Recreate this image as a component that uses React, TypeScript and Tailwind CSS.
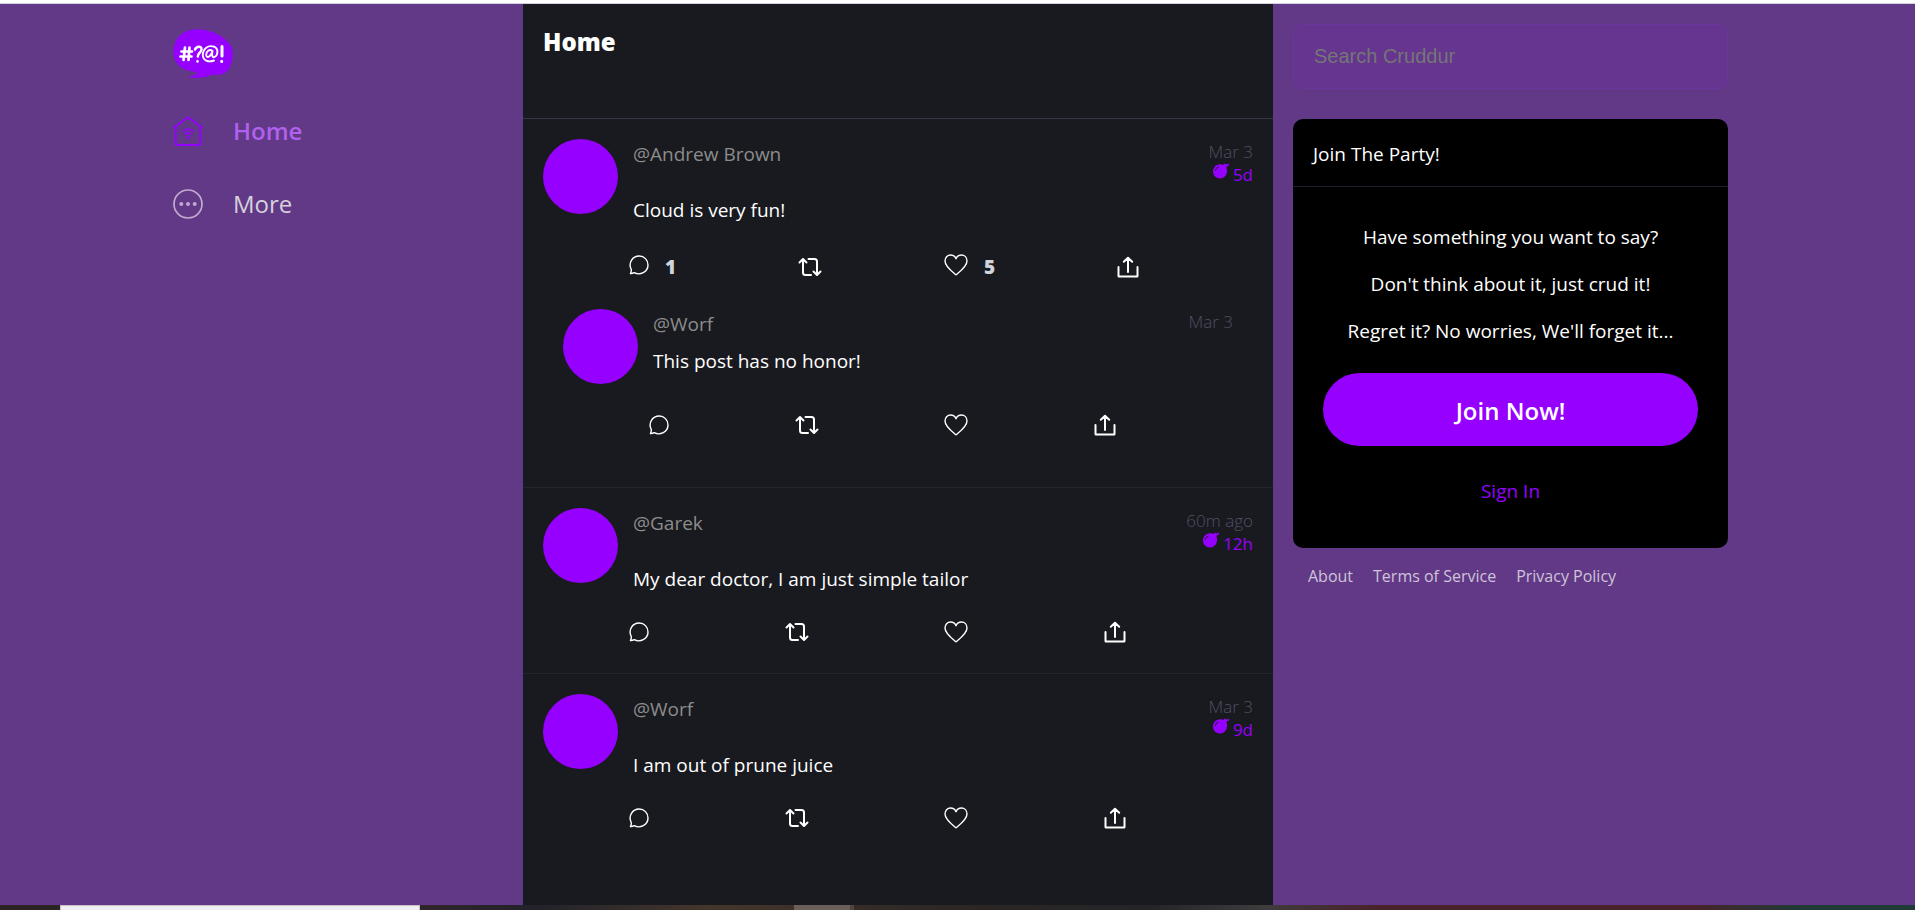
import React from "react";

type Stats = { replies?: number; likes?: number };
type Post = { handle: string; ago: string; expires?: string; message: string } & Stats;

const LogoIcon = () => (
  <svg className="h-[50px] w-[60px]" viewBox="0 0 60 50" role="img" aria-label="Cruddur">
    <path
      d="M23 .3C11 .6 2 8 .6 20C-.6 32 6 41 20 42.500L25 43.500C22 46 18 47.500 14.500 48C23 50 33 49 39 45.500C46 47 54 45 57 38C60 30 61 23 58 17C52 7 37 0 23 .3Z"
      fill="#9500FF"
    />
    <g fill="none" stroke="#fff" strokeWidth="2.500" strokeLinecap="round" strokeLinejoin="round">
      <path d="M8.500 22.500H19M7.500 27.500H18.500M12 18.500L10.500 31M16.500 18.500L15.500 31" strokeWidth="2.700" />
      <path d="M22 20.500C23.500 17 29 16.500 28.500 20.500C28.200 23.500 24.500 24.500 24.800 27.500M24.500 32.300V32.500" />
      <path d="M39.500 22C36.500 19.500 33 22.500 33.200 26C33.500 29.500 37.500 28.500 39.500 22C38.500 27 39.500 29 41.500 28C45 26 46 20 41 17.700C35 15.500 30 20 29.800 26C30 32 36 33.500 41 31.500" strokeWidth="1.900" />
      <path d="M49 17.500V27M48.700 32.300V32.500" strokeWidth="3" />
    </g>
  </svg>
);

const HomeIcon = () => (
  <svg className="size-[30px] text-[#9500ff]" viewBox="0 0 30 30" fill="none" stroke="currentColor" strokeWidth="2" aria-hidden="true">
    <path d="M.8 11.500L15 1.200L29.200 11.500M2.700 10.500V27.500Q2.700 29 4.200 29H25.800Q27.300 29 27.300 27.500V10.500" strokeLinejoin="round" />
    <path d="M9.500 15.500Q15 10.800 20.500 15.500M12 18.500Q15 16 18 18.500" strokeWidth="1.700" />
    <circle cx="15" cy="21.300" r="1.600" fill="currentColor" stroke="none" />
  </svg>
);

const MoreIcon = () => (
  <svg className="size-[30px] text-[#c0aad0]" viewBox="0 0 30 30" fill="currentColor" aria-hidden="true">
    <circle cx="15" cy="15" r="14" fill="none" stroke="currentColor" strokeWidth="1.700" />
    <circle cx="8.300" cy="15" r="2" />
    <circle cx="15" cy="15" r="2" />
    <circle cx="21.700" cy="15" r="2" />
  </svg>
);

const ReplyIcon = () => (
  <svg className="size-5" viewBox="0 0 20 20" fill="none" stroke="currentColor" strokeWidth="1.400" strokeLinejoin="round" aria-hidden="true">
    <path d="M1.500 18.600C2.200 17 2.500 15.600 2.200 14.400C-1 8 3.300 1 10.300 1C15.200 1 19 5 19 10C19 17 11 20.800 5.200 17.700C4 18.400 2.800 18.700 1.500 18.600Z" />
  </svg>
);

const RepostIcon = () => (
  <svg className="h-5 w-6" viewBox="0 0 24 20" fill="none" stroke="currentColor" strokeWidth="2" strokeLinecap="round" strokeLinejoin="round" aria-hidden="true">
    <path d="M1.500 5.500L5 2L8.500 5.500M5 2.500V15.500Q5 18 7.500 18H13M15.500 14.500L19 18L22.500 14.500M19 17.500V4.500Q19 2 16.500 2H10.500" />
  </svg>
);

const LikeIcon = () => (
  <svg className="h-[22px] w-6" viewBox="0 0 24 22" fill="none" stroke="currentColor" strokeWidth="1.400" strokeLinejoin="round" aria-hidden="true">
    <path d="M12 20.800C8 17.500 1 12.500 1 7C1 3.500 3.400 1 6.500 1C9 1 11 2.300 12 4.700C13 2.300 15 1 17.500 1C20.600 1 23 3.500 23 7C23 12.500 16 17.500 12 20.800Z" />
  </svg>
);

const ShareIcon = () => (
  <svg className="h-[22px] w-[22px]" viewBox="0 0 22 22" fill="none" stroke="currentColor" strokeWidth="2" strokeLinecap="round" strokeLinejoin="round" aria-hidden="true">
    <path d="M1.500 11V20Q1.500 20.500 2 20.500H20Q20.500 20.500 20.500 20V11M11 16V2M6.800 5.800L11 1.800L15.200 5.800" />
  </svg>
);

const BombIcon = () => (
  <svg className="h-4 w-[17px]" viewBox="0 0 17 16" fill="currentColor" aria-hidden="true">
    <path d="M7 1.200C8.400 1.100 9.600 1.500 10.500 2L11.500 .6L13.500 1.400L16.500 .2L15.500 2L16 3H14.200L13.500 4.500C15.500 9.500 12.500 15.500 7 15.500C3 15.500 0 12.500 0 8.500C0 4.500 3 1.400 7 1.200Z" />
    <path d="M2.200 8Q2.600 4.800 5.600 4" fill="none" stroke="#1b1429" strokeWidth="1" />
  </svg>
);

function Avatar() {
  return <div className="size-[75px] shrink-0 rounded-full bg-[#9500ff]" />;
}

function Actions({ replies, likes, className }: Stats & { className: string }) {
  return (
    <div className={`flex items-center justify-between text-white ${className}`}>
      <button aria-label="Reply" className="flex items-center gap-4">
        <span className={replies ? "pb-1" : ""}><ReplyIcon /></span>
        {replies && <span className="text-[19px] leading-6 font-extrabold text-gray-300">{replies}</span>}
      </button>
      <button aria-label="Repost"><RepostIcon /></button>
      <button aria-label="Like" className="flex items-center gap-4">
        <span className={likes ? "pb-1" : ""}><LikeIcon /></span>
        {likes && <span className="text-[19px] leading-6 font-extrabold text-gray-300">{likes}</span>}
      </button>
      <button aria-label="Share"><ShareIcon /></button>
    </div>
  );
}

function PostHead({ post, reply = false }: { post: Post; reply?: boolean }) {
  return (
    <div className="flex gap-[15px]">
      <Avatar />
      <div className="min-w-0 flex-1">
        <div className={`flex justify-between ${reply ? "h-[37px]" : "h-[56px]"}`}>
          <a href="#profile" className="text-[19px] leading-[30px] text-[#8c8c8c]">{post.handle}</a>
          <div className="pt-px text-right text-[17px] leading-[23px] font-light text-[#4c5162]">
            <div>{post.ago}</div>
            {post.expires && (
              <div className="flex items-start justify-end gap-[3px] font-normal text-[#9500ff]">
                <BombIcon />
                {post.expires}
              </div>
            )}
          </div>
        </div>
        <p className="text-[19px] leading-[30px] text-white">{post.message}</p>
      </div>
    </div>
  );
}

const posts: (Post & { reply?: Post })[] = [
  {
    handle: "@Andrew Brown", ago: "Mar 3", expires: "5d", message: "Cloud is very fun!", replies: 1, likes: 5,
    reply: { handle: "@Worf", ago: "Mar 3", message: "This post has no honor!" },
  },
  { handle: "@Garek", ago: "60m ago", expires: "12h", message: "My dear doctor, I am just simple tailor" },
  { handle: "@Worf", ago: "Mar 3", expires: "9d", message: "I am out of prune juice" },
];

export default function App() {
  return (
    <div className="flex min-h-screen flex-col bg-[#613986] font-['Open_Sans','Noto_Sans',sans-serif]">
      <div className="h-1 border-b border-[#d5cfdc] bg-white" />
      <div className="flex flex-1 justify-center">
        <nav className="flex w-[356px] flex-col pt-[25px] pl-[6px]">
          <a href="#top" className="self-start"><LogoIcon /></a>
          <a href="#home" className="mt-[33px] flex h-[38px] items-center gap-[30px] text-2xl font-semibold text-[#b061ee]">
            <HomeIcon />Home
          </a>
          <a href="#more" className="mt-[35px] flex h-[38px] items-center gap-[30px] text-2xl text-[#d6d1dc]">
            <MoreIcon />More
          </a>
        </nav>

        <main className="w-[750px] bg-[#191a1f]">
          <header className="h-[115px] border-b border-[#323846] px-5 pt-[22px]">
            <h1 className="text-[24px] leading-8 font-extrabold text-white">Home</h1>
          </header>
          {posts.map((post) => (
            <article key={post.handle} className="border-b border-[#22252f] p-5 last:border-b-0">
              <PostHead post={post} />
              <Actions replies={post.replies} likes={post.likes} className={post.reply ? "mt-[26px] h-8 pr-[114px] pl-[86px]" : "mt-[22px] h-8 pr-[127px] pl-[86px]"} />
              {post.reply && (
                <div className="px-5 pt-[26px] pb-[26px]">
                  <PostHead post={post.reply} reply />
                  <Actions className="mt-[25px] h-8 pr-[117px] pl-[86px]" />
                </div>
              )}
              {!post.reply && <div className="h-[5px]" />}
            </article>
          ))}
        </main>

        <aside className="w-[475px] px-5 pt-5">
          <input
            type="search"
            aria-label="Search Cruddur"
            placeholder="Search Cruddur"
            className="h-[65px] w-full rounded-[10px] border border-[#6b369d] bg-[#653590] px-5 font-['Liberation_Sans',sans-serif] text-[20px] text-white placeholder:text-[#757575]"
          />
          <section className="mt-[30px] overflow-hidden rounded-[10px] bg-black text-[19px] text-white">
            <h2 className="h-[68px] border-b border-[#1b202b] px-5 pt-5 leading-[30px]">Join The Party!</h2>
            <div className="px-[30px] pt-[35px] pb-[42px] text-center leading-[30px]">
              <div className="flex flex-col gap-[17px]">
                <p>Have something you want to say?</p>
                <p>Don&apos;t think about it, just crud it!</p>
                <p>Regret it? No worries, We&apos;ll forget it...</p>
              </div>
              <button className="mt-[27px] h-[73px] w-full rounded-full bg-[#9500ff] pt-[2px] text-2xl font-semibold">Join Now!</button>
              <a href="#signin" className="mt-[30px] block text-[#9500ff]">Sign In</a>
            </div>
          </section>
          <footer className="mt-4 flex gap-5 px-[15px] text-base leading-6 text-[#cfc4d9]">
            <a href="#about">About</a>
            <a href="#terms">Terms of Service</a>
            <a href="#privacy">Privacy Policy</a>
          </footer>
        </aside>
      </div>
      <div className="flex h-[5px] bg-[linear-gradient(90deg,#2b2423_0%,#30252b_22%,#22222a_28%,#45362b_37%,#2c2624_50%,#242427_60%,#3e3c3d_66%,#4a222b_72%,#4a2229_88%,#203a36_94%)]">
        <div className="ml-[60px] w-[360px] border border-b-0 border-[#c8c0c8] bg-[#f1f0f2]" />
        <div className="ml-[374px] w-[60px] border-r-4 border-[#51453f] bg-[#6b5f59]" />
      </div>
    </div>
  );
}
